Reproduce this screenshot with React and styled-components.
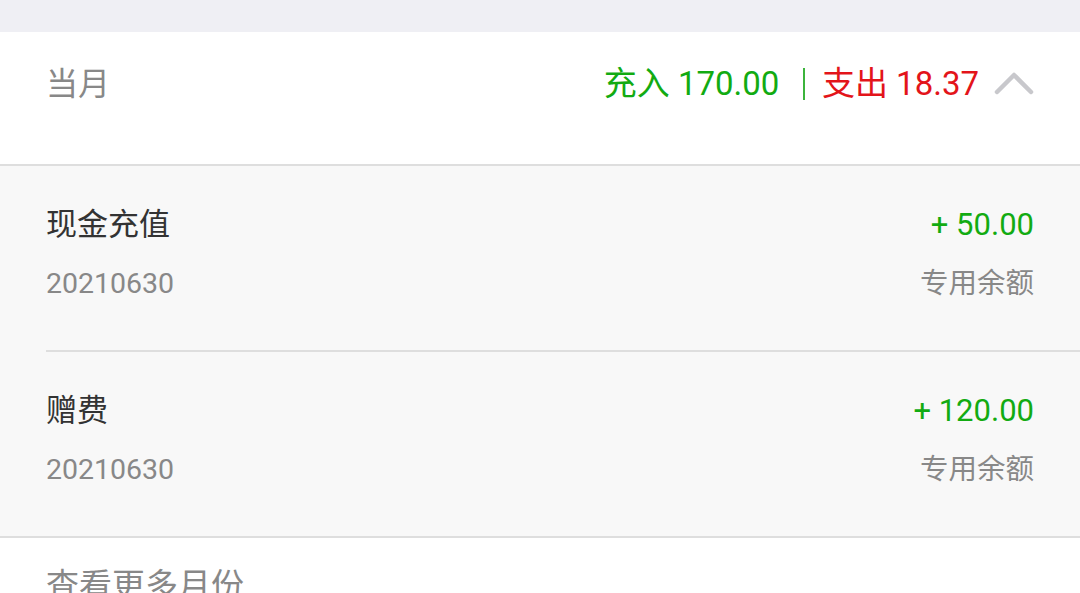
import React from 'react';
import styled, { createGlobalStyle } from 'styled-components';

const GlobalStyle = createGlobalStyle`
  body {
    margin: 0;
    background: #fff;
    font-family: Roboto, "Noto Sans CJK SC", sans-serif;
  }
`;

const TopBar = styled.div`
  height: 32px;
  background-color: #efeff4;
`;

const MonthHeader = styled.header`
  display: flex;
  align-items: center;
  justify-content: space-between;
  height: 134px;
  box-sizing: border-box;
  padding: 32px 46px 60px;
  background: #fff;
  border-bottom: 2px solid #dedede;
`;

const MonthLabel = styled.div`
  font-size: 32px;
  line-height: 40px;
  color: #888;
`;

const Totals = styled.div`
  display: flex;
  align-items: center;
  font-size: 33px;
  line-height: 40px;
`;

const Amount = styled.span`
  color: ${(p) => (p.$kind === 'out' ? '#e3141a' : '#12ab12')};
`;

const Divider = styled.span`
  width: 1.5px;
  height: 32px;
  background: #3cb43c;
  margin: 0 17px 0 24px;
`;

const Chevron = styled.svg`
  margin-left: 15px;
  margin-top: -2px;
`;

const List = styled.div`
  background: #f8f8f8;
  border-bottom: 2px solid #dedede;
`;

const Item = styled.div`
  margin-left: 46px;
  padding: 39px 46px 0 0;
  height: 186px;
  box-sizing: border-box;
  border-bottom: 2px solid #dedede;
  &:last-child {
    height: 184px;
    border-bottom: none;
  }
`;

const Line = styled.div`
  display: flex;
  justify-content: space-between;
  align-items: center;
`;

const Title = styled.div`
  font-size: 31px;
  line-height: 40px;
  color: ${(p) => p.$color || '#333'};
`;

const Sub = styled.div`
  margin-top: 21px;
  font-size: 28.5px;
  line-height: 36px;
  color: #888;
`;

const More = styled.div`
  padding: 28px 46px 0;
  font-size: 33px;
  line-height: 40px;
  color: #888;
`;

const records = [
  { title: '现金充值', amount: '+ 50.00', date: '20210630', type: '专用余额' },
  { title: '赠费', amount: '+ 120.00', date: '20210630', type: '专用余额' },
];

export default function App() {
  return (
    <>
      <GlobalStyle />
      <TopBar />
      <MonthHeader>
        <MonthLabel>当月</MonthLabel>
        <Totals>
          <Amount>充入 170.00</Amount>
          <Divider />
          <Amount $kind="out">支出 18.37</Amount>
          <Chevron width="40" height="24" viewBox="0 0 40 24">
            <path
              d="M3 21 L20 4 L37 21"
              fill="none"
              stroke="#c8c8cc"
              strokeWidth="4.5"
              strokeLinecap="round"
              strokeLinejoin="round"
            />
          </Chevron>
        </Totals>
      </MonthHeader>
      <List>
        {records.map((r, i) => (
          <Item key={i}>
            <Line>
              <Title>{r.title}</Title>
              <Title $color="#12ab12">{r.amount}</Title>
            </Line>
            <Line>
              <Sub>{r.date}</Sub>
              <Sub>{r.type}</Sub>
            </Line>
          </Item>
        ))}
      </List>
      <More>查看更多月份</More>
    </>
  );
}
